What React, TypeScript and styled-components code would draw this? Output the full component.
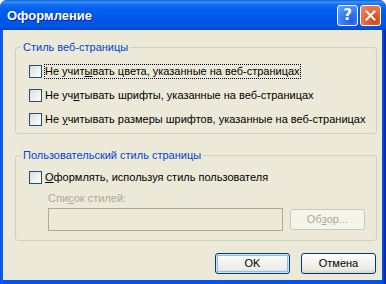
import styled, { createGlobalStyle } from 'styled-components';

const GlobalStyle = createGlobalStyle`
  html, body {
    margin: 0;
    padding: 0;
    background: #ffffff;
  }
  body {
    font-family: "Liberation Sans", Arial, sans-serif;
    font-size: 11px;
  }
`;

const Window = styled.div`
  width: 386px;
  height: 284px;
  box-sizing: border-box;
  display: flex;
  flex-direction: column;
  background: linear-gradient(to right, #0831d9 0px, #166aee 1px, #0055ea 3px, #0055ea 382px, #0440c8 384px, #001ea0 386px);
  border-radius: 7px 7px 0 0;
  overflow: hidden;
`;

const TitleBar = styled.div`
  height: 30px;
  flex-shrink: 0;
  display: flex;
  align-items: center;
  padding: 0 5px 0 7px;
  background: linear-gradient(
    to bottom,
    #0a5fd8 0%,
    #3d95ff 7%,
    #1a70f5 14%,
    #0060f0 30%,
    #0058e8 60%,
    #0055e2 88%,
    #0048cc 100%
  );
`;

const Title = styled.span`
  flex: 1;
  color: #ffffff;
  font-family: "Liberation Sans", Arial, sans-serif;
  font-weight: bold;
  font-size: 13px;
  text-shadow: 1px 1px 0 #0a1e8c;
`;

const TitleButtons = styled.div`
  display: flex;
  gap: 2px;
`;

const TitleButton = styled.div<{ kind: 'help' | 'close' }>`
  width: 21px;
  height: 21px;
  box-sizing: border-box;
  border: 1px solid #ffffff;
  border-radius: 3px;
  display: flex;
  align-items: center;
  justify-content: center;
  color: #ffffff;
  font-family: "DejaVu Sans", sans-serif;
  font-weight: bold;
  font-size: 15px;
  background: ${(p) =>
    p.kind === 'close'
      ? 'radial-gradient(circle at 70% 75%, #cc4419 0%, #e5663a 45%, #f08a63 100%)'
      : 'radial-gradient(circle at 70% 75%, #1f5ee8 0%, #3a80f5 50%, #6aa4ff 100%)'};
`;

const Body = styled.div`
  flex: 1;
  margin: 0 4px 4px 3px;
  background: #ece9d8;
  padding: 11px 5px 6px 12px;
  display: flex;
  flex-direction: column;
`;

const Group = styled.fieldset<{ gapTop?: number }>`
  margin: ${(p) => p.gapTop ?? 0}px 0 0 0;
  padding: 0;
  border: 1px solid #d0d0bf;
  border-radius: 3px;
  min-width: 0;
`;

const Legend = styled.legend`
  margin-left: 5px;
  padding: 0 2px;
  color: #0046d5;
  line-height: 13px;
`;

const GroupContent = styled.div<{ pad: string }>`
  padding: ${(p) => p.pad};
  display: flex;
  flex-direction: column;
`;

const CheckRow = styled.div`
  height: 17px;
  display: flex;
  align-items: center;
  & + & {
    margin-top: 7px;
  }
`;

const Box = styled.span`
  width: 13px;
  height: 13px;
  box-sizing: border-box;
  flex-shrink: 0;
  border: 1px solid #1c5180;
  background: linear-gradient(135deg, #dcdcd5 0%, #f0f0ec 55%, #ffffff 100%);
`;

const Label = styled.span<{ focused?: boolean; disabled?: boolean }>`
  margin-left: 2px;
  padding: 1px;
  line-height: 13px;
  white-space: nowrap;
  color: ${(p) => (p.disabled ? '#aca899' : '#000000')};
  outline: ${(p) => (p.focused ? '1px dotted #000000' : 'none')};
  outline-offset: -1px;
`;

const Indent = styled.div`
  margin-left: 19px;
  display: flex;
  flex-direction: column;
`;

const Caption = styled.div`
  margin-top: 6px;
  line-height: 13px;
  color: #aca899;
`;

const FieldRow = styled.div`
  margin-top: 3px;
  display: flex;
  align-items: center;
`;

const TextBox = styled.div`
  width: 235px;
  height: 23px;
  box-sizing: border-box;
  border: 1px solid #aeab9d;
  background: #ece9d8;
`;

const Button = styled.div<{ isDefault?: boolean; disabled?: boolean }>`
  width: 75px;
  height: 21px;
  box-sizing: border-box;
  display: flex;
  align-items: center;
  justify-content: center;
  border-radius: 3px;
  line-height: 13px;
  border: 1px solid ${(p) => (p.disabled ? '#cac8bb' : '#003c74')};
  color: ${(p) => (p.disabled ? '#aca899' : '#000000')};
  background: ${(p) =>
    p.disabled
      ? '#f5f4ea'
      : 'linear-gradient(to bottom, #ffffff 0%, #f6f6f2 30%, #ecebe5 80%, #d8d4c8 100%)'};
  box-shadow: ${(p) =>
    p.isDefault ? 'inset 0 0 0 1px #cee7ff, inset 0 0 0 2px #98b8ef' : 'none'};
`;

const BrowseButton = styled(Button)`
  margin-left: 7px;
`;

const Footer = styled.div`
  margin-top: 12px;
  margin-right: 1px;
  display: flex;
  justify-content: flex-end;
  gap: 11px;
`;

const CloseIcon = () => (
  <svg width="11" height="11" viewBox="0 0 11 11">
    <path d="M1.5 1.5 L9.5 9.5 M9.5 1.5 L1.5 9.5" stroke="#ffffff" strokeWidth="2" strokeLinecap="square" />
  </svg>
);

const App = () => (
  <>
    <GlobalStyle />
    <Window>
      <TitleBar>
        <Title>Оформление</Title>
        <TitleButtons>
          <TitleButton kind="help">?</TitleButton>
          <TitleButton kind="close">
            <CloseIcon />
          </TitleButton>
        </TitleButtons>
      </TitleBar>
      <Body>
        <Group>
          <Legend>Стиль веб-страницы</Legend>
          <GroupContent pad="9px 13px 5px 13px">
            <CheckRow>
              <Box />
              <Label focused>
                Не учит<u>ы</u>вать цвета, указанные на веб-страницах
              </Label>
            </CheckRow>
            <CheckRow>
              <Box />
              <Label>
                Не уч<u>и</u>тывать шрифты, указанные на веб-страницах
              </Label>
            </CheckRow>
            <CheckRow>
              <Box />
              <Label>
                Не <u>у</u>читывать размеры шрифтов, указанные на веб-страницах
              </Label>
            </CheckRow>
          </GroupContent>
        </Group>
        <Group gapTop={15}>
          <Legend>Пользовательский стиль страницы</Legend>
          <GroupContent pad="7px 10px 9px 13px">
            <CheckRow>
              <Box />
              <Label>
                <u>О</u>формлять, используя стиль пользователя
              </Label>
            </CheckRow>
            <Indent>
              <Caption>
                Спи<u>с</u>ок стилей:
              </Caption>
              <FieldRow>
                <TextBox />
                <BrowseButton disabled>
                  Об<u>з</u>ор...
                </BrowseButton>
              </FieldRow>
            </Indent>
          </GroupContent>
        </Group>
        <Footer>
          <Button isDefault>OK</Button>
          <Button>Отмена</Button>
        </Footer>
      </Body>
    </Window>
  </>
);

export default App;
